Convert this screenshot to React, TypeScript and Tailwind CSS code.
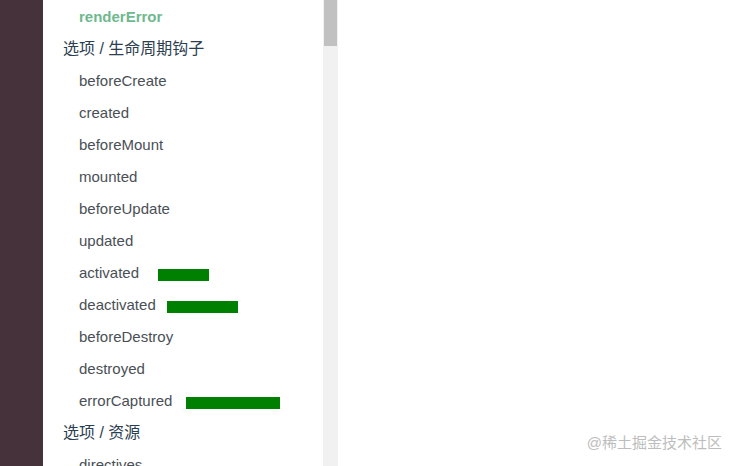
import React from "react";

type Row = {
  label: string;
  kind: "item" | "active" | "section";
  bar?: { gap: number; width: number };
};

const rows: Row[] = [
  { label: "renderError", kind: "active" },
  { label: "选项 / 生命周期钩子", kind: "section" },
  { label: "beforeCreate", kind: "item" },
  { label: "created", kind: "item" },
  { label: "beforeMount", kind: "item" },
  { label: "mounted", kind: "item" },
  { label: "beforeUpdate", kind: "item" },
  { label: "updated", kind: "item" },
  { label: "activated", kind: "item", bar: { gap: 19, width: 51 } },
  { label: "deactivated", kind: "item", bar: { gap: 11, width: 71 } },
  { label: "beforeDestroy", kind: "item" },
  { label: "destroyed", kind: "item" },
  { label: "errorCaptured", kind: "item", bar: { gap: 14, width: 94 } },
  { label: "选项 / 资源", kind: "section" },
  { label: "directives", kind: "item" },
];

const font = {
  fontFamily: '"Liberation Sans", "Noto Sans CJK SC", sans-serif',
};

const App: React.FC = () => {
  return (
    <div className="flex h-[466px] w-[737px] overflow-hidden bg-white" style={font}>
      {/* 左側深色欄 */}
      <div className="w-[43px] shrink-0 bg-[#46323a]" />

      {/* 側邊導覽 */}
      <div className="w-[280px] shrink-0 bg-white">
        <ul className="flex flex-col pt-[1px]">
          {rows.map((row) => (
            <li
              key={row.label}
              className={`flex h-8 items-center ${
                row.kind === "section" ? "pl-[20px]" : "pl-[36px]"
              }`}
            >
              <span
                className={
                  row.kind === "section"
                    ? "text-[16px] text-[#2c3e50]"
                    : row.kind === "active"
                    ? "text-[15px] font-bold text-[#6fb98f]"
                    : "text-[15px] text-[#4a4f55]"
                }
              >
                {row.label}
              </span>
              {row.bar && (
                <span
                  className="mt-[3px] h-[12px] bg-[#008000]"
                  style={{ marginLeft: row.bar.gap, width: row.bar.width }}
                />
              )}
            </li>
          ))}
        </ul>
      </div>

      {/* 捲軸 */}
      <div className="w-[15px] shrink-0 bg-[#f1f1f1] px-[1px]">
        <div className="h-[46px] bg-[#c1c1c1]" />
      </div>

      {/* 內容區 */}
      <div className="relative flex-1 bg-white">
        <span className="absolute bottom-[12px] right-[15px] text-[15px] text-[#bdbdbd]">
          @稀土掘金技术社区
        </span>
      </div>
    </div>
  );
};

export default App;
